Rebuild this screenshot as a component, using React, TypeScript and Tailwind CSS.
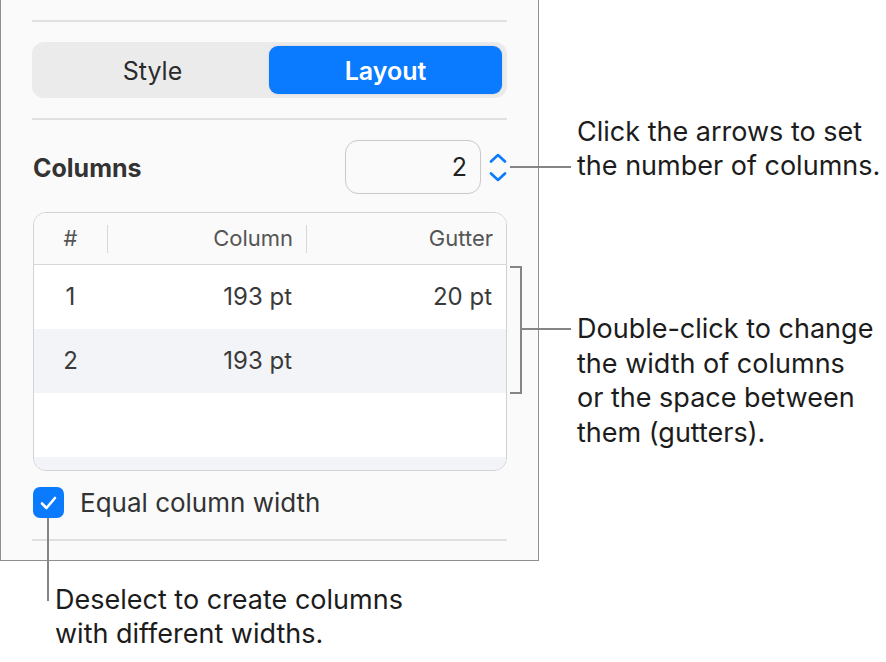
// Layout inspector panel with annotation callouts

const rows = [
  { n: '1', col: '193 pt', gut: '20 pt', bg: 'bg-white' },
  { n: '2', col: '193 pt', gut: '', bg: 'bg-[#f3f4f8]' },
  { n: '', col: '', gut: '', bg: 'bg-white' },
  { n: '', col: '', gut: '', bg: 'bg-[#f3f4f8]' },
];

function Chevron({ up }: { up?: boolean }) {
  return (
    <svg width="18" height="10" viewBox="0 0 18 10" fill="none">
      <path
        d={up ? 'M2 8.5 L9 2 L16 8.5' : 'M2 1.5 L9 8 L16 1.5'}
        stroke="#0a7aff"
        strokeWidth="2.6"
        strokeLinecap="round"
        strokeLinejoin="round"
      />
    </svg>
  );
}

export default function App() {
  return (
    <div className="relative w-[886px] h-[662px] bg-white font-['Inter','Liberation_Sans',sans-serif] overflow-hidden">
      {/* ── Inspector panel ── */}
      <div className="w-[539px] h-[561px] bg-[#fafafa] border-l border-r border-b border-[#8e8e8e] px-[31px] flex flex-col">
        <div className="mt-[20px] h-[2px] bg-[#e0e0e0]" />

        <div className="mt-[20px] h-[56px] rounded-[12px] bg-[#ebebeb] flex pt-[4px] pb-[4px] pl-[4px] pr-[5px]">
          <div className="flex-1 flex items-center justify-center pt-[3px] text-[25px] text-[#2b2b2b]">Style</div>
          <div className="flex-1 flex items-center justify-center pt-[3px] rounded-[9px] bg-[#0a7aff] text-white text-[25px] font-semibold shadow-[0_0_2px_rgba(0,0,0,0.15)]">
            Layout
          </div>
        </div>

        <div className="mt-[20px] h-[2px] bg-[#e0e0e0]" />

        <div className="mt-[20px] flex items-center h-[54px]">
          <div className="flex-1 pl-[1px] pt-[3px] text-[25px] font-bold text-[#333]">Columns</div>
          <div className="w-[136px] h-[54px] rounded-[13px] border-[1.5px] border-[#c9c9c9] bg-[#fafafa] flex items-center justify-end pr-[13px] pt-[2px] text-[25px] text-[#222]">
            2
          </div>
          <div className="ml-[7px] w-[19px] flex flex-col items-center gap-[9px]">
            <Chevron up />
            <Chevron />
          </div>
        </div>

        <div className="mt-[18px] ml-[1px] h-[259px] rounded-[13px] border-[1.5px] border-[#d2d2d2] overflow-hidden flex flex-col">
          <div className="h-[52px] shrink-0 grid grid-cols-[73px_199px_1fr] items-center border-b-[1.5px] border-[#d8d8d8] bg-[#fafafa] text-[22px] text-[#555]">
            <div className="text-center">#</div>
            <div className="h-[28px] border-l-[1.5px] border-[#d8d8d8] flex items-center justify-end pr-[13px]">Column</div>
            <div className="h-[28px] border-l-[1.5px] border-[#d8d8d8] flex items-center justify-end pr-[13px]">Gutter</div>
          </div>
          {rows.map((r, i) => (
            <div
              key={i}
              className={`${r.bg} h-[64px] shrink-0 grid grid-cols-[73px_199px_1fr] items-center text-[24px] text-[#3a3a3a]`}
            >
              <div className="text-center">{r.n}</div>
              <div className="text-right pr-[14px]">{r.col}</div>
              <div className="text-right pr-[14px]">{r.gut}</div>
            </div>
          ))}
        </div>

        <div className="mt-[16px] h-[31px] flex items-center gap-[16px]">
          <div className="w-[31px] h-[31px] ml-[1px] rounded-[7px] bg-[#0a7aff] flex items-center justify-center">
            <svg width="17" height="14" viewBox="0 0 17 14" fill="none">
              <path d="M2 7.5 L6.5 12 L15 2" stroke="white" strokeWidth="2.6" strokeLinecap="round" strokeLinejoin="round" />
            </svg>
          </div>
          <div className="text-[26px] leading-[31px] text-[#333]">Equal column width</div>
        </div>

        <div className="mt-[21px] h-[2px] bg-[#e0e0e0]" />
      </div>

      {/* ── Callout: stepper ── */}
      <div className="absolute left-[510px] top-[166px] w-[61px] h-[2px] bg-[#858585]" />
      <div className="absolute left-[577px] top-[115px] text-[27px] leading-[34px] text-[#1c1c1c]">
        <div>Click the arrows to set</div>
        <div>the number of columns.</div>
      </div>

      {/* ── Callout: table bracket ── */}
      <div className="absolute left-[510px] top-[266px] w-[12px] h-[128px] border-t-2 border-r-2 border-b-2 border-[#858585]" />
      <div className="absolute left-[520px] top-[328px] w-[51px] h-[2px] bg-[#858585]" />
      <div className="absolute left-[577px] top-[312px] text-[27px] leading-[34.5px] text-[#1c1c1c]">
        <div>Double-click to change</div>
        <div>the width of columns</div>
        <div>or the space between</div>
        <div>them (gutters).</div>
      </div>

      {/* ── Callout: checkbox ── */}
      <div className="absolute left-[47px] top-[518px] w-[2px] h-[83px] bg-[#858585]" />
      <div className="absolute left-[55px] top-[583px] text-[27px] leading-[34px] text-[#1c1c1c]">
        <div>Deselect to create columns</div>
        <div>with different widths.</div>
      </div>
    </div>
  );
}
